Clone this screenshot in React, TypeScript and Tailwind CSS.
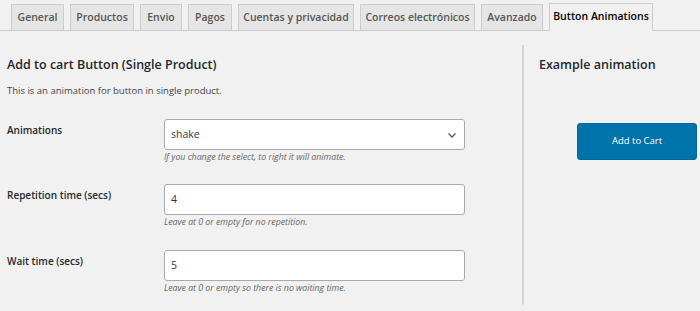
import React from 'react';

const tabs = [
  { label: 'General', w: 'w-[53px]' },
  { label: 'Productos', w: 'w-[64px]' },
  { label: 'Envio', w: 'w-[42px]' },
  { label: 'Pagos', w: 'w-[44px]' },
  { label: 'Cuentas y privacidad', w: 'w-[116px]' },
  { label: 'Correos electrónicos', w: 'w-[115px]' },
  { label: 'Avanzado', w: 'w-[62px]' },
];

const fields = [
  { label: 'Animations', value: 'shake', help: 'If you change the select, to right it will animate.', select: true, h: 'h-[65px]' },
  { label: 'Repetition time (secs)', value: '4', help: 'Leave at 0 or empty for no repetition.', select: false, h: 'h-[66px]' },
  { label: 'Wait time (secs)', value: '5', help: 'Leave at 0 or empty so there is no waiting time.', select: false, h: 'h-[60px]' },
];

const ChevronDown = () => (
  <svg width="12" height="12" viewBox="0 0 12 12" className="text-[#555]">
    <path d="M2.5 4.5 L6 8 L9.5 4.5" fill="none" stroke="currentColor" strokeWidth="1.3" />
  </svg>
);

const App: React.FC = () => {
  return (
    <div className="w-[700px] h-[311px] overflow-hidden bg-[#f1f1f1] font-['Open_Sans',sans-serif] text-[#444]">
      {/* Tabs */}
      <div className="flex items-end gap-[6px] pl-[11px] pt-[3px] border-b border-[#ccc] h-[31px]">
        {tabs.map((t) => (
          <div
            key={t.label}
            className={`${t.w} h-[27px] -mb-px flex items-center justify-center border border-[#ccc] bg-[#e5e5e5] text-[10.5px] font-semibold text-[#555] whitespace-nowrap`}
          >
            {t.label}
          </div>
        ))}
        <div className="w-[104px] h-[28px] -mb-px flex items-center justify-center border border-[#ccc] border-b-[#f1f1f1] bg-[#f1f1f1] text-[10.5px] font-semibold text-black whitespace-nowrap">
          Button Animations
        </div>
      </div>

      <div className="flex">
        {/* Left column */}
        <div className="w-[522px] pl-[7px] pt-[26px]">
          <h2 className="text-[12.5px] font-semibold text-[#23282d] leading-[16px]">
            Add to cart Button (Single Product)
          </h2>
          <p className="mt-[12px] text-[9.5px] leading-[12px] text-[#444]">
            This is an animation for button in single product.
          </p>

          <div className="mt-[22px] flex flex-col">
            {fields.map((f) => (
              <div key={f.label} className={`${f.h} flex`}>
                <div className="w-[157px] pt-[4px] text-[10px] font-semibold text-[#23282d]">{f.label}</div>
                <div>
                  <div className="w-[301px] h-[31px] bg-white border border-[#a7aaad] rounded-[3px] flex items-center justify-between pl-[6px] pr-[6px] text-[10.5px] text-[#32373c]">
                    <span>{f.value}</span>
                    {f.select && <ChevronDown />}
                  </div>
                  <p className="mt-[1px] text-[8.75px] italic text-[#666] leading-[12px]">{f.help}</p>
                </div>
              </div>
            ))}
          </div>
        </div>

        {/* Right column */}
        <div className="mt-[14px] border-l-2 border-[#d4d4d4] pl-[15px] pt-[12px] h-[260px] flex-1">
          <h2 className="text-[12.5px] font-semibold text-[#23282d] leading-[16px]">Example animation</h2>
          <button className="mt-[50px] ml-[38px] w-[120px] h-[37px] bg-[#0073aa] border border-[#006799] rounded-[3px] text-white text-[9.5px]">
            Add to Cart
          </button>
        </div>
      </div>
    </div>
  );
};

export default App;
